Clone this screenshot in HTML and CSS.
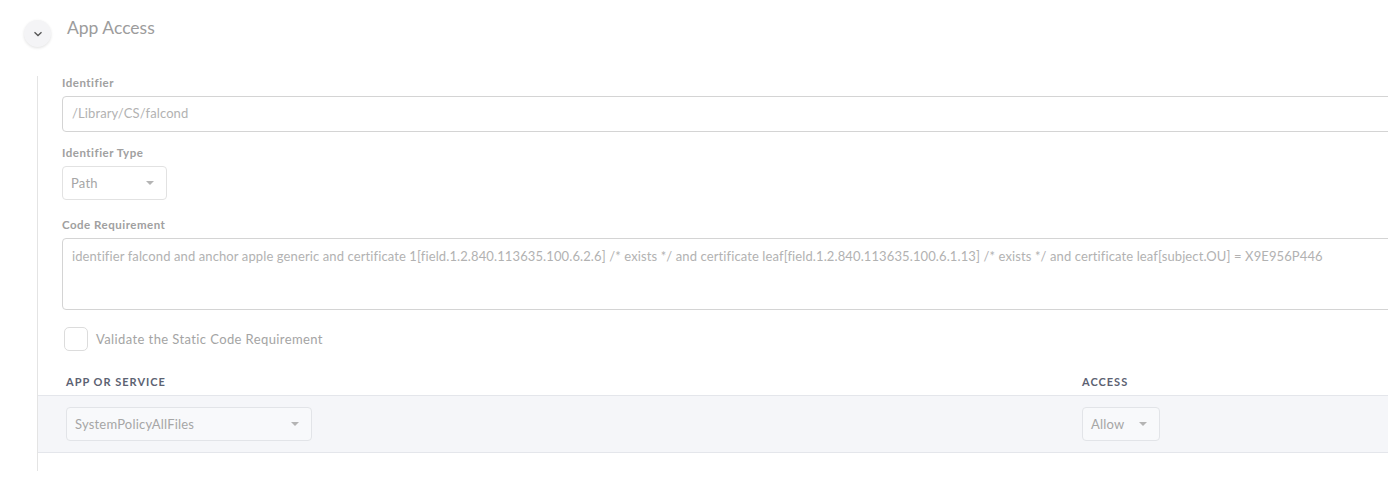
FILE: index.html
```html
<!DOCTYPE html>
<html lang="en">
<head>
    <meta charset="UTF-8">
    <meta name="viewport" content="width=device-width, initial-scale=1.0">
    <title>App Access</title>
    <link rel="stylesheet" href="styles.css">
</head>
<body>
    <div class="section">
        <div class="section-head">
            <button class="toggle" type="button">
                <svg width="10" height="6" viewBox="0 0 10 6"><path d="M1.5 1.2 L5 4.5 L8.5 1.2" fill="none" stroke="#555" stroke-width="1.3"/></svg>
            </button>
            <h2>App Access</h2>
        </div>

        <div class="section-body">
            <div class="fields">
                <div class="form-group">
                    <label>Identifier</label>
                    <div class="input">/Library/CS/falcond</div>
                </div>
                <div class="form-group">
                    <label>Identifier Type</label>
                    <div class="select select-type">Path <span class="caret"></span></div>
                </div>
                <div class="form-group">
                    <label>Code Requirement</label>
                    <div class="input textarea">identifier falcond and anchor apple generic and certificate 1[field.1.2.840.113635.100.6.2.6] /* exists */ and certificate leaf[field.1.2.840.113635.100.6.1.13] /* exists */ and certificate leaf[subject.OU] = X9E956P446</div>
                </div>
                <div class="check-row">
                    <span class="checkbox"></span>
                    <span>Validate the Static Code Requirement</span>
                </div>
            </div>

            <div class="table">
                <div class="table-head">
                    <div>App or Service</div>
                    <div>Access</div>
                </div>
                <div class="table-row">
                    <div><div class="select select-service">SystemPolicyAllFiles <span class="caret"></span></div></div>
                    <div><div class="select select-access">Allow <span class="caret"></span></div></div>
                </div>
            </div>
        </div>
    </div>
</body>
</html>
```

FILE: styles.css
```css
html {
    overflow: hidden;
}
body {
    margin: 0;
    font-family: Lato, "Open Sans", sans-serif;
    background: #fff;
    width: 1500px;
}
.section {
    padding: 20px 0 0 24px;
}
.section-head {
    display: flex;
    align-items: center;
    gap: 16px;
}
.toggle {
    width: 27px;
    height: 27px;
    border-radius: 50%;
    border: none;
    background: #f4f4f6;
    box-shadow: 0 1px 3px rgba(0, 0, 0, 0.12);
    display: flex;
    align-items: center;
    justify-content: center;
    padding: 0;
}
h2 {
    margin: 0;
    font-size: 17.5px;
    font-weight: 400;
    color: #9c9c9c;
    position: relative;
    top: -6px;
}
.section-body {
    margin: 29px 0 0 13px;
    border-left: 1px solid #e4e4e4;
    padding-bottom: 18px;
}
.fields {
    padding-left: 24px;
}
.form-group label {
    display: block;
    font-size: 11.5px;
    font-weight: 700;
    letter-spacing: 0.5px;
    line-height: 14px;
    color: #a0a0a0;
    margin-bottom: 6px;
}
.input {
    width: 1340px;
    height: 36px;
    box-sizing: border-box;
    border: 1px solid #d4d4d4;
    border-radius: 4px;
    padding: 0 9px;
    font-size: 13px;
    letter-spacing: 0.11px;
    line-height: 33px;
    color: #b2b2b2;
    margin-bottom: 14px;
}
.textarea {
    height: 72px;
    line-height: 18px;
    padding-top: 8px;
    white-space: nowrap;
    margin-bottom: 17px;
}
.select {
    display: flex;
    align-items: center;
    justify-content: space-between;
    box-sizing: border-box;
    height: 34px;
    border: 1px solid #e2e2e2;
    border-radius: 4px;
    padding: 0 12px 0 8px;
    font-size: 13px;
    letter-spacing: 0.2px;
    color: #a6a6a6;
    background: #fff;
}
.select-type {
    width: 105px;
    margin-bottom: 18px;
}
.caret {
    width: 0;
    height: 0;
    border-left: 4px solid transparent;
    border-right: 4px solid transparent;
    border-top: 4px solid #b4b4b4;
}
.check-row {
    display: flex;
    align-items: center;
    gap: 8px;
    padding-left: 2px;
    font-size: 13px;
    letter-spacing: 0.4px;
    color: #a4a4a4;
}
.checkbox {
    width: 24px;
    height: 24px;
    box-sizing: border-box;
    border: 1px solid #dcdcdc;
    border-radius: 5px;
}
.table {
    margin-top: 24px;
}
.table-head,
.table-row {
    display: grid;
    grid-template-columns: 1016px 1fr;
    padding-left: 28px;
}
.table-head {
    font-size: 11px;
    font-weight: 700;
    letter-spacing: 1px;
    text-transform: uppercase;
    color: #5c6272;
    line-height: 14px;
    padding-bottom: 6px;
}
.table-row {
    background: #f5f6f9;
    border-top: 1px solid #e4e6eb;
    border-bottom: 1px solid #e4e6eb;
    padding-top: 11px;
    padding-bottom: 11px;
}
.table-row .select {
    height: 34px;
    background: #f8f9fb;
    border-color: #e2e4e8;
}
.select-service {
    width: 246px;
}
.select-access {
    width: 78px;
}
```
